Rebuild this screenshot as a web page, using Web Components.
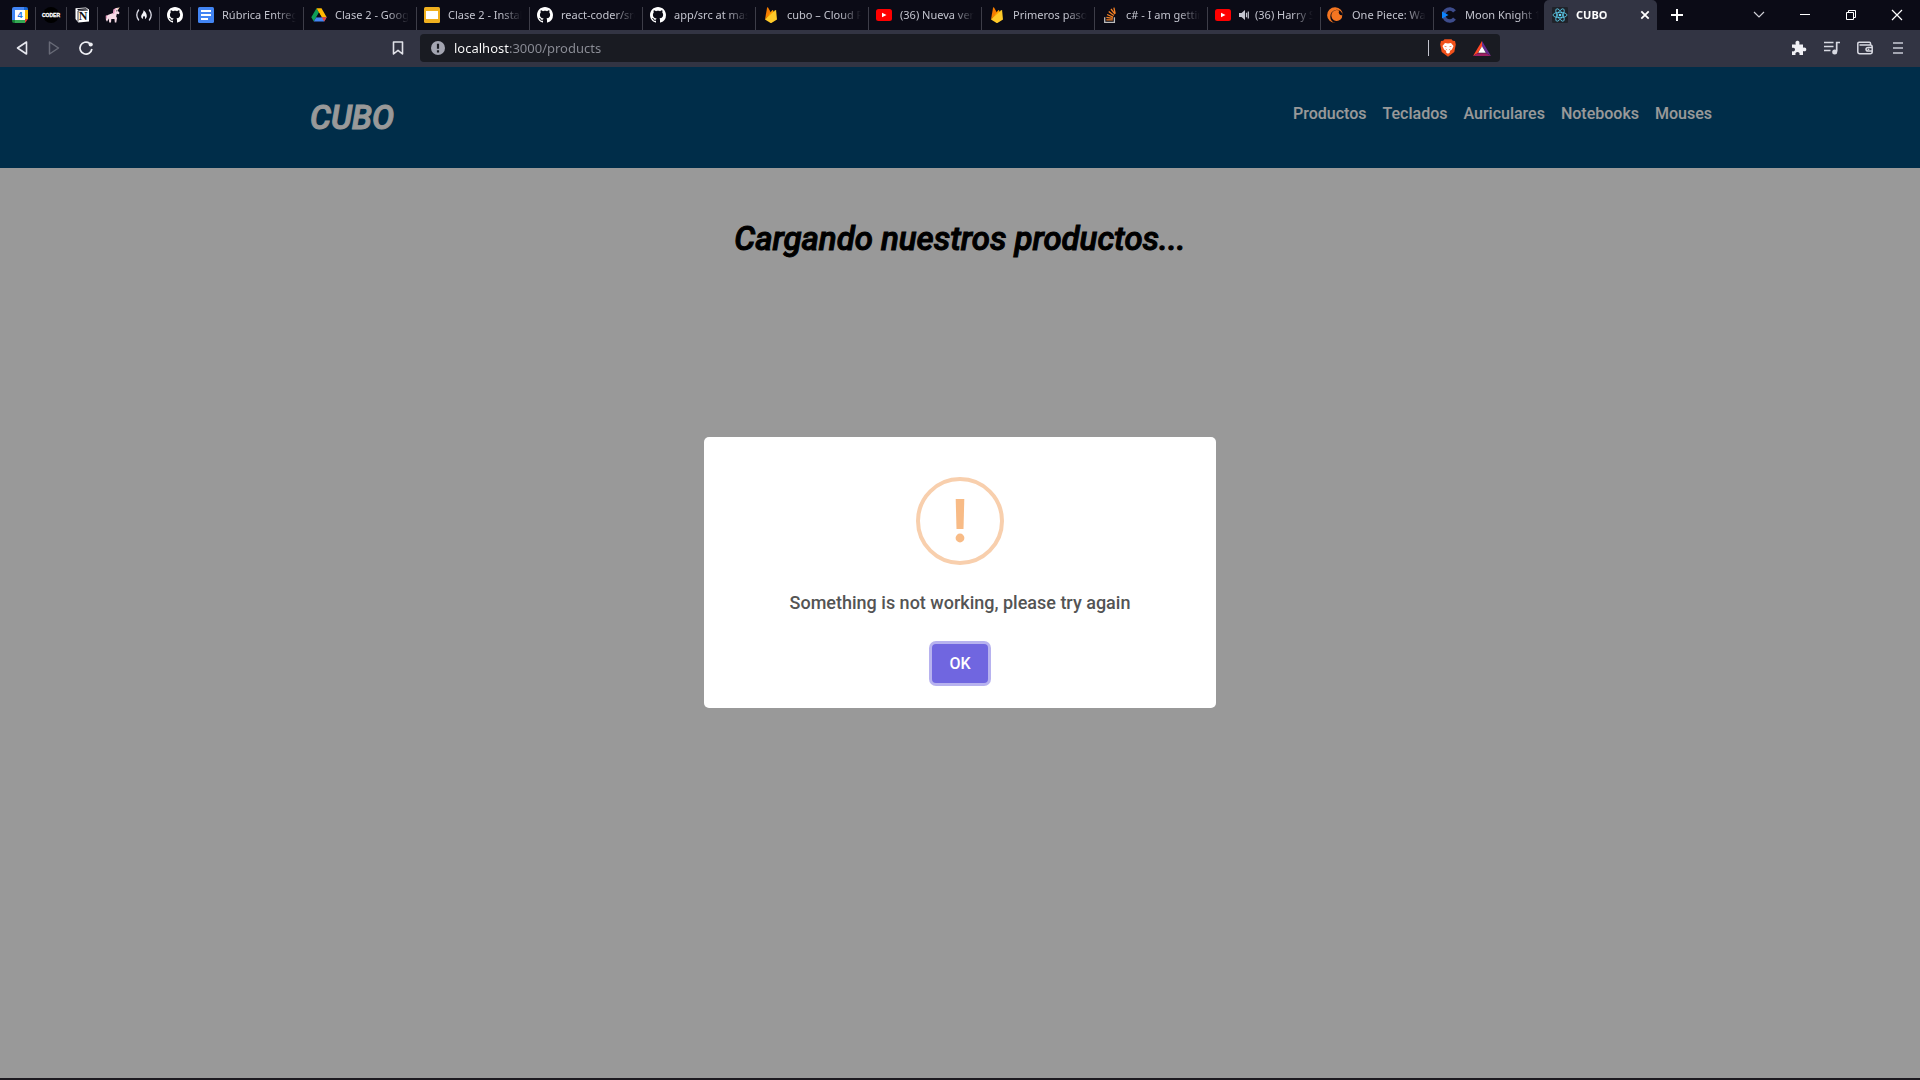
<!DOCTYPE html>
<html lang="es">
<head>
<meta charset="utf-8">
<title>CUBO</title>
<style>
  html, body { height: 100%; margin: 0; }
  body { font-family: Roboto, "Liberation Sans", sans-serif; background: #1d1a20; }
</style>
</head>
<body>
<browser-window>
  <tab-strip slot="tabs">
    <browser-tab pinned icon="calendar" label="Calendar"></browser-tab>
    <browser-tab pinned icon="coder" label="Coder"></browser-tab>
    <browser-tab pinned icon="notion" label="Notion"></browser-tab>
    <browser-tab pinned icon="unicorn" label="Unicorn"></browser-tab>
    <browser-tab pinned icon="camp" label="Camp"></browser-tab>
    <browser-tab pinned icon="github" label="GitHub"></browser-tab>
    <browser-tab icon="docs">Rúbrica Entrega</browser-tab>
    <browser-tab icon="drive">Clase 2 - Google</browser-tab>
    <browser-tab icon="slides">Clase 2 - Instala</browser-tab>
    <browser-tab icon="github">react-coder/src</browser-tab>
    <browser-tab icon="github">app/src at mast</browser-tab>
    <browser-tab icon="firebase">cubo – Cloud F</browser-tab>
    <browser-tab icon="youtube">(36) Nueva vers</browser-tab>
    <browser-tab icon="firebase">Primeros pasos</browser-tab>
    <browser-tab icon="stack">c# - I am gettin</browser-tab>
    <browser-tab icon="youtube" audible>(36) Harry S</browser-tab>
    <browser-tab icon="crunchy">One Piece: Wan</browser-tab>
    <browser-tab icon="moon">Moon Knight 1</browser-tab>
    <browser-tab icon="react" active>CUBO</browser-tab>
  </tab-strip>
  <browser-toolbar slot="toolbar"></browser-toolbar>
  <store-page>
    <store-header slot="header">
      <store-link href="#productos">Productos</store-link>
      <store-link href="#teclados">Teclados</store-link>
      <store-link href="#auriculares">Auriculares</store-link>
      <store-link href="#notebooks">Notebooks</store-link>
      <store-link href="#mouses">Mouses</store-link>
    </store-header>
    <loading-title>Cargando nuestros productos...</loading-title>
    <alert-dialog slot="dialog">Something is not working, please try again</alert-dialog>
  </store-page>
</browser-window>

<script>
const ICONS = {
  calendar: '<path fill="#fff" d="M3 3h10v10H3z"/><path fill="#4285f4" d="M0 2Q0 0 2 0h11v3H3v10H0z"/><path fill="#1967d2" d="M12 0h2q2 0 2 2v1h-4z"/><path fill="#fbbc04" d="M13 3h3v9h-3z"/><path fill="#34a853" d="M3 13h10v3H3z"/><path fill="#188038" d="M0 13h3v3H2q-2 0-2-2z"/><path fill="#ea4335" d="M13 12h3l-3 4z"/><text x="8" y="11.200" font-size="9" font-weight="700" text-anchor="middle" fill="#1a73e8" font-family="Liberation Sans">4</text>',
  coder: '<circle cx="8" cy="8" r="8" fill="#000"/><text x="8" y="10" font-size="5" font-weight="700" text-anchor="middle" fill="#fff" stroke="#fff" stroke-width=".3" font-family="Liberation Sans Narrow, Liberation Sans">CODER</text>',
  notion: '<path fill="#fff" d="M1.500 1.300 12 .5l3 2v12L4.300 15.500 1.500 12z"/><path fill="#0b0b16" d="M2.800 1.900 12 1.200l1.600 1.200L4.200 3z"/><path fill="#fff" d="M4.500 4.200l9.200-.7v10.300l-9.200.7z"/><path fill="none" stroke="#0b0b16" stroke-width=".8" d="M4 14.500V3.800l10-.7"/><text x="9.200" y="13" font-size="12" font-weight="700" text-anchor="middle" fill="#111" font-family="Liberation Serif">N</text>',
  unicorn: '<path fill="#f6dbe6" d="M14.500.5 12.600 3.500l1.900 2.200-.7 1.500-2-.5-.6 2.800.8 1.500-.7 4.500H9.800l-.3-3.500H6.300L6 15.500H4.200l-.5-4L2 14.700.8 12.500 2.300 8.300l3-1.300 3-1 .4-3.500 2.500-1.500z"/><path fill="#e79ac0" d="M8.600 2.200 11 1l-1 2.600-.8 3.200-1.400.4zM.7 8.700l1.500-.6-.4 3-1 1z"/><path fill="#e8c069" d="m14.900.2-2.200 2.400-.6-.7z"/><circle cx="11.800" cy="3.800" r=".6" fill="#333"/>',
  camp: '<g fill="none" stroke="#d9d9e4" stroke-width="1.300" stroke-linecap="round"><path d="M2.600 3Q-1 8 2.600 13M13.400 3Q17 8 13.400 13"/></g><path fill="#f2f2f8" d="M7.600 3.200c2 1.600 3.400 4 3.200 6-.1 1.500-1 2.300-1.900 2.900.4-1.500.3-2.300-.9-3.400-.9 1.100-1.400 2-.8 3.400-1.400-.6-2.200-1.600-2-3.100.2-1.600 2.500-3.200 2.400-5.800z"/>',
  github: '<path fill="#fff" d="M8 0C3.580 0 0 3.580 0 8c0 3.540 2.290 6.530 5.470 7.590.4.070.55-.17.55-.38 0-.19-.01-.82-.01-1.490-2.010.37-2.530-.49-2.690-.94-.09-.23-.48-.94-.82-1.130-.28-.15-.68-.52-.01-.53.63-.01 1.080.58 1.230.82.72 1.210 1.870.87 2.330.66.070-.52.28-.87.51-1.070-1.780-.2-3.640-.89-3.640-3.950 0-.87.31-1.590.82-2.150-.08-.2-.36-1.020.08-2.120 0 0 .67-.21 2.200.82.64-.18 1.320-.27 2-.27s1.360.09 2 .27c1.530-1.040 2.200-.82 2.200-.82.44 1.100.16 1.920.08 2.120.51.56.82 1.270.82 2.150 0 3.070-1.870 3.750-3.650 3.950.29.25.54.73.54 1.480 0 1.070-.01 1.930-.01 2.200 0 .21.15.46.55.38A8.010 8.010 0 0 0 16 8c0-4.420-3.580-8-8-8z"/>',
  docs: '<rect width="16" height="16" rx="1.500" fill="#4285f4"/><path stroke="#fff" stroke-width="2" d="M3 4h10M3 8h10M3 12h7"/>',
  drive: '<path fill="#0f9d58" d="M5.500 1.200 8 5.600 2.800 14.500.3 10.300z"/><path fill="#ffba00" d="M5.500 1.200h5l5.200 9.100h-5z"/><path fill="#4285f4" d="M5.300 10.300h10.400l-2.500 4.200H2.800z"/><path fill="#0b0b16" d="m8 5.700 2.600 4.600H5.300z"/><path fill="#ea4335" d="M10.700 10.300h5l-2.500 4.200z"/>',
  slides: '<rect width="16" height="16" rx="1.500" fill="#f0b01f"/><path fill="#fff" d="M2 4h12v8H2z"/>',
  firebase: '<path fill="#f57c00" d="M2 12.600 4.100.6q.4-.8.9 0L8 5.800z"/><path fill="#ffa000" d="m2 12.600 7.200-9.300q.4-.6.8 0L12 7z"/><path fill="#ffca28" d="m2 12.600 10.300-9.300q.7-.5.8.3L14 12.600l-5.200 3.100q-.8.4-1.600 0z"/>',
  youtube: '<rect y="2" width="16" height="12" rx="2.500" fill="#f00"/><path fill="#fff" d="m6 5.700 4.500 2.300L6 10.300z"/>',
  stack: '<path fill="none" stroke="#bcbbbb" stroke-width="1.300" d="M2.700 10.300v5h9.700v-5"/><path stroke="#f48024" stroke-width="1.300" d="M4.300 12.900h6.500M4.400 10.300l6.400 1.100M5.100 7.500l6 2.600M6.700 4.400l5.200 4M9 2l4 5.200M11.900.6l1.300 6"/>',
  crunchy: '<path fill="#f47521" d="M2.300 9.800A6.300 6.300 0 1 1 14.900 8.600 7.900 7.900 0 1 0 7.400 16 6.500 6.500 0 0 1 2.300 9.800z"/><path fill="#f47521" d="M14.300 8.300a3 3 0 0 1-3-4.700A5.500 5.500 0 1 0 14.300 8.300z"/>',
  moon: '<path fill="none" stroke="#3d4c8c" stroke-width="3.600" d="M13.500 4.400A6 6 0 1 0 13.500 11.700"/><path fill="#0b84ff" d="M1 4.500 7.500 8 1 11.500z"/>',
  react: '<rect width="16" height="16" rx="1" fill="#20232a"/><g fill="none" stroke="#61dafb" stroke-width=".75"><ellipse cx="8" cy="8" rx="7" ry="2.700"/><ellipse cx="8" cy="8" rx="7" ry="2.700" transform="rotate(60 8 8)"/><ellipse cx="8" cy="8" rx="7" ry="2.700" transform="rotate(120 8 8)"/></g><circle cx="8" cy="8" r="1.300" fill="#61dafb"/>',
  audio: '<path fill="#c3c4ce" d="M0 6h2.500L6 3v10L2.500 10H0z"/><path stroke="#c3c4ce" stroke-width="1.200" d="M7.500 5.700v4.600M9.300 4.500v7"/>',
  close: '<path stroke="#fff" stroke-width="1.800" d="m4.300 4.300 7.400 7.400M11.700 4.300 4.300 11.700"/>',
  plus: '<path stroke="#fff" stroke-width="2" d="M8 2v12M2 8h12"/>',
  chevron: '<path fill="none" stroke="#d0d0d6" stroke-width="1.200" d="m3 5 5 5 5-5"/>',
  minimize: '<path stroke="#fff" d="M3 7.500h10"/>',
  restore: '<path fill="none" stroke="#fff" d="M3.500 5.500h7v7h-7zM5.500 5.500v-2h7v7h-2"/>',
  exit: '<path stroke="#fff" stroke-width="1.200" d="m3 3 10 10M13 3 3 13"/>',
  back: '<path fill="none" stroke="#e6e7ee" stroke-width="1.600" stroke-linejoin="round" d="M12.500 2v12L3.500 8z"/>',
  forward: '<path fill="none" stroke="#686a77" stroke-width="1.500" stroke-linejoin="round" d="M3.500 2v12l9-6z"/>',
  reload: '<path fill="none" stroke="#eeeff4" stroke-width="1.700" d="M11.500 3.200A6 6 0 1 0 13.900 9"/><circle cx="12.700" cy="4.500" r="2.100" fill="#eeeff4"/>',
  bookmark: '<path fill="none" stroke="#e0e1e8" stroke-width="1.600" stroke-linejoin="round" d="M3.500 2h9v12L8 10.300 3.500 14z"/>',
  info: '<circle cx="8" cy="8" r="7" fill="#a3a5b1"/><path fill="#191b22" d="M6.900 3.700h2.200v5H6.900zM6.900 10.200h2.200v2.200H6.900z"/>',
  brave: '<path fill="#f1511b" d="M4.500-.8h7L12.800.8 15 1l.8 3.500-1.500 7.500L8 16.800 1.700 12 .2 4.500 1 1l2.200-.2z"/><path fill="#fff" d="m5 3 3 .6L11 3l2.500 3-1.600 3.400L9.700 11l.4 1.200L8 13.800l-2.100-1.600.4-1.200-2.200-1.600L2.500 6z"/><path fill="#f1511b" d="m3.700 5.700 3 .8-.7.8zM12.300 5.700l-3 .8.700.8zM5 8.500l2 .9.300 1zM11 8.500l-2 .9-.3 1z"/>',
  bat: '<path fill="#ff4724" d="M9 1v5.200L4.600 13.200 0 16z"/><path fill="#9e1f63" d="M0 16l4.600-2.800h8.800L18 16z"/><path fill="#662d91" d="M9 1l9 15-4.600-2.800L9 6.200z"/><path fill="#fff" d="m9 6.200 3.800 6.500H5.200z"/>',
  puzzle: '<path fill="#f0f0f5" d="M1 4.500h3.800C4 1.500 5.200.7 6.500.7S9 1.500 8.300 4.500H12v3.200c2.400-.6 3.300.5 3.300 1.700s-.9 2.300-3.300 1.700V15H8.500c.5-2.200-.7-3-2-3s-2.500.8-2 3H1v-3.700c2.400.4 3-.7 3-1.800S3.400 7.200 1 7.800z"/>',
  playlist: '<path stroke="#d8d9e2" stroke-width="1.700" fill="none" d="M0 2.500h9.500M0 6.500h9.500M0 10.500h6.500M12.700 11.500v-9H16"/><circle cx="10.700" cy="12" r="2.500" fill="#d8d9e2"/>',
  wallet: '<path fill="none" stroke="#d8d9e2" stroke-width="1.500" d="M13.500 5V3.300q0-1-1-1H2.200q-1.400 0-1.400 1.400v8q0 2 2 2h10.400q2 0 2-2V7q0-2-2-2H2.500M15.200 7.500h-4q-2.200 0-2.200 1.800t2.200 1.800h4"/><circle cx="11.500" cy="9.300" r=".9" fill="#d8d9e2"/>',
  menu: '<path stroke="#c9cad6" stroke-width="1.600" d="M3 3h10M3 8h10M3 13h10"/>'
};

const define = (name, build) => customElements.define(name, class extends HTMLElement {
  connectedCallback() {
    if (this.shadowRoot) return;
    const template = document.createElement('template');
    template.innerHTML = build(this);
    this.attachShadow({ mode: 'open' }).append(template.content.cloneNode(true));
  }
});

define('ui-icon', el => `
  <style>
    :host { display: block; flex: none; width: 16px; height: 16px; }
    :host([wide]) { width: 18px; }
    svg { display: block; width: 100%; height: 100%; overflow: visible; }
  </style>
  <svg viewBox="0 0 ${el.hasAttribute('wide') ? 18 : 16} 16" aria-hidden="true">${ICONS[el.getAttribute('name')]}</svg>`);

define('icon-button', el => `
  <style>
    :host { display: block; flex: none; width: 32px; height: 100%; }
    button { display: grid; place-items: center; width: 100%; height: 100%; padding: 0; border: 0; background: none; }
  </style>
  <button type="button" aria-label="${el.getAttribute('label')}"><ui-icon name="${el.getAttribute('icon')}"></ui-icon></button>`);

define('browser-window', () => `
  <style>
    :host { display: flex; flex-direction: column; height: 100vh; box-sizing: border-box; padding-bottom: 2px; }
    ::slotted(store-page) { flex: 1; }
  </style>
  <slot name="tabs"></slot><slot name="toolbar"></slot><slot></slot>`);

define('tab-strip', () => `
  <style>
    :host { display: flex; height: 30px; background: #0b0b16; font: 11px/16px "Noto Sans", sans-serif; }
    nav { display: flex; flex: 1; min-width: 0; padding-left: 5px; }
    .new { width: 40px; margin-right: 39px; }
    .window { width: 46px; }
  </style>
  <nav role="tablist"><slot></slot></nav>
  <icon-button class="new" icon="plus" label="New tab"></icon-button>
  <icon-button class="window" icon="chevron" label="Search tabs"></icon-button>
  <icon-button class="window" icon="minimize" label="Minimize"></icon-button>
  <icon-button class="window" icon="restore" label="Restore"></icon-button>
  <icon-button class="window" icon="exit" label="Close window"></icon-button>`);

define('browser-tab', el => {
  const pinned = el.hasAttribute('pinned'), active = el.hasAttribute('active');
  return `
  <style>
    :host { display: flex; flex: 1 1 0; min-width: 0; align-items: center; color: #c3c4ce;
      background: linear-gradient(#3d3d48, #3d3d48) right bottom / 1px 23px no-repeat; }
    :host([pinned]) { flex: 0 0 31px; }
    :host([active]) { margin-left: -3px; color: #fff; background: #323443; border-radius: 5px 5px 0 0; font-weight: 700; }
    button { display: flex; flex: 1; min-width: 0; height: 100%; align-items: center; gap: 8px; padding: 0 5px 0 7px;
      border: 0; background: none; color: inherit; font: inherit; text-align: left; }
    :host([active]) button { padding-left: 8px; }
    .audio { margin-right: -8px; }
    .label { flex: 1; min-width: 0; overflow: hidden; white-space: nowrap;
      -webkit-mask-image: linear-gradient(90deg, #000 calc(100% - 24px), transparent calc(100% - 3px));
      mask-image: linear-gradient(90deg, #000 calc(100% - 24px), transparent calc(100% - 3px)); }
    .close { width: 24px; }
  </style>
  <button type="button" role="tab" aria-selected="${active}" ${pinned ? `aria-label="${el.getAttribute('label')}"` : ''}>
    <ui-icon name="${el.getAttribute('icon')}"></ui-icon>
    ${el.hasAttribute('audible') ? '<ui-icon class="audio" name="audio"></ui-icon>' : ''}
    ${pinned ? '' : '<span class="label"><slot></slot></span>'}
  </button>
  ${active ? '<icon-button class="close" icon="close" label="Close tab"></icon-button>' : ''}`;
});

define('browser-toolbar', () => `
  <style>
    :host { display: flex; height: 37px; box-sizing: border-box; padding-bottom: 1px; align-items: center; background: #323443; }
    .side { display: flex; flex: 1; height: 100%; align-items: center; padding: 0 0 0 6px; }
    .right { justify-content: flex-end; padding: 0 6px 0 0; }
    .right icon-button { width: 33px; }
    .mark { margin: 0 6px 0 auto; }
    .box { display: flex; flex: 0 0 56.25%; box-sizing: border-box; height: 28px; align-items: center; gap: 8px;
      padding: 0 9px 0 10px; border-radius: 4px; background: #191b22; }
    input { flex: 1; min-width: 0; padding: 0; border: 0; outline: 0; font: 13px/20px "Noto Sans", sans-serif; color: #8c8e97;
      background: linear-gradient(90deg, #fff 55px, #8c8e97 55px); -webkit-background-clip: text; background-clip: text;
      -webkit-text-fill-color: transparent; }
    .line { width: 1px; height: 16px; margin-right: 3px; background: #c3c4ce; }
    .bat { margin-left: 9px; }
  </style>
  <div class="side">
    <icon-button icon="back" label="Back"></icon-button>
    <icon-button icon="forward" label="Forward"></icon-button>
    <icon-button icon="reload" label="Reload"></icon-button>
    <icon-button class="mark" icon="bookmark" label="Bookmark"></icon-button>
  </div>
  <div class="box">
    <ui-icon name="info"></ui-icon>
    <input type="text" aria-label="Address" value="localhost:3000/products" spellcheck="false">
    <span class="line"></span>
    <ui-icon name="brave"></ui-icon>
    <ui-icon class="bat" name="bat" wide></ui-icon>
  </div>
  <div class="side right">
    <icon-button icon="puzzle" label="Extensions"></icon-button>
    <icon-button icon="playlist" label="Media"></icon-button>
    <icon-button icon="wallet" label="Wallet"></icon-button>
    <icon-button icon="menu" label="Menu"></icon-button>
  </div>`);

define('store-page', () => `
  <style>
    :host { display: flex; flex-direction: column; position: relative; min-height: 0; background: #fff;
      --title: italic 500 33px/40px Roboto, "Liberation Sans", sans-serif; }
    main { padding-top: 51px; }
  </style>
  <slot name="header"></slot><main><slot></slot></main><slot name="dialog"></slot>`);

define('store-header', () => `
  <style>
    :host { display: flex; height: 101px; align-items: center; justify-content: space-between; box-sizing: border-box;
      padding: 0 208px 0 310px; background: #004c7b; color: #fff; }
    h1 { margin: 0; font: var(--title); -webkit-text-stroke: 1px currentColor; }
    nav { display: flex; gap: 16px; padding-bottom: 8px; }
  </style>
  <h1>CUBO</h1><nav><slot></slot></nav>`);

define('store-link', el => `
  <style>
    :host { display: block; font-size: 16px; line-height: 20px; font-weight: 500; }
    a { color: inherit; text-decoration: none; }
  </style>
  <a href="${el.getAttribute('href')}"><slot></slot></a>`);

define('loading-title', () => `
  <style>
    :host { display: block; text-align: center; color: #000; }
    h2 { margin: 0; font: var(--title); -webkit-text-stroke: 1px currentColor; }
  </style>
  <h2><slot></slot></h2>`);

define('alert-dialog', () => `
  <style>
    :host { position: absolute; inset: 0; display: grid; place-items: center; background: rgba(0, 0, 0, .4); }
    section { display: flex; flex-direction: column; align-items: center; box-sizing: border-box; width: 512px; max-width: 100%;
      padding: 40px 20px 25px; border-radius: 5px; background: #fff; color: #545454; }
    svg { display: block; width: 88px; height: 88px; }
    p { margin: 28px 0 31px; font-size: 18px; line-height: 20px; font-weight: 500; }
    button { padding: 10px 17px; border: 0; border-radius: 4px; outline: 0; background: #7066e0; color: #fff;
      box-shadow: 0 0 0 3px rgba(112, 102, 224, .5); font: 500 16px/19px Roboto, sans-serif; }
  </style>
  <section role="alertdialog" aria-modal="true" aria-labelledby="message">
    <svg viewBox="0 0 88 88" aria-hidden="true">
      <circle cx="44" cy="44" r="42" fill="none" stroke="#f8cfad" stroke-width="4"/>
      <path fill="#f8bb86" d="M39.700 22h8.600l-.8 30h-7z"/><circle cx="44" cy="61" r="4.400" fill="#f8bb86"/>
    </svg>
    <p id="message"><slot></slot></p>
    <button type="button">OK</button>
  </section>`);
</script>
</body>
</html>
